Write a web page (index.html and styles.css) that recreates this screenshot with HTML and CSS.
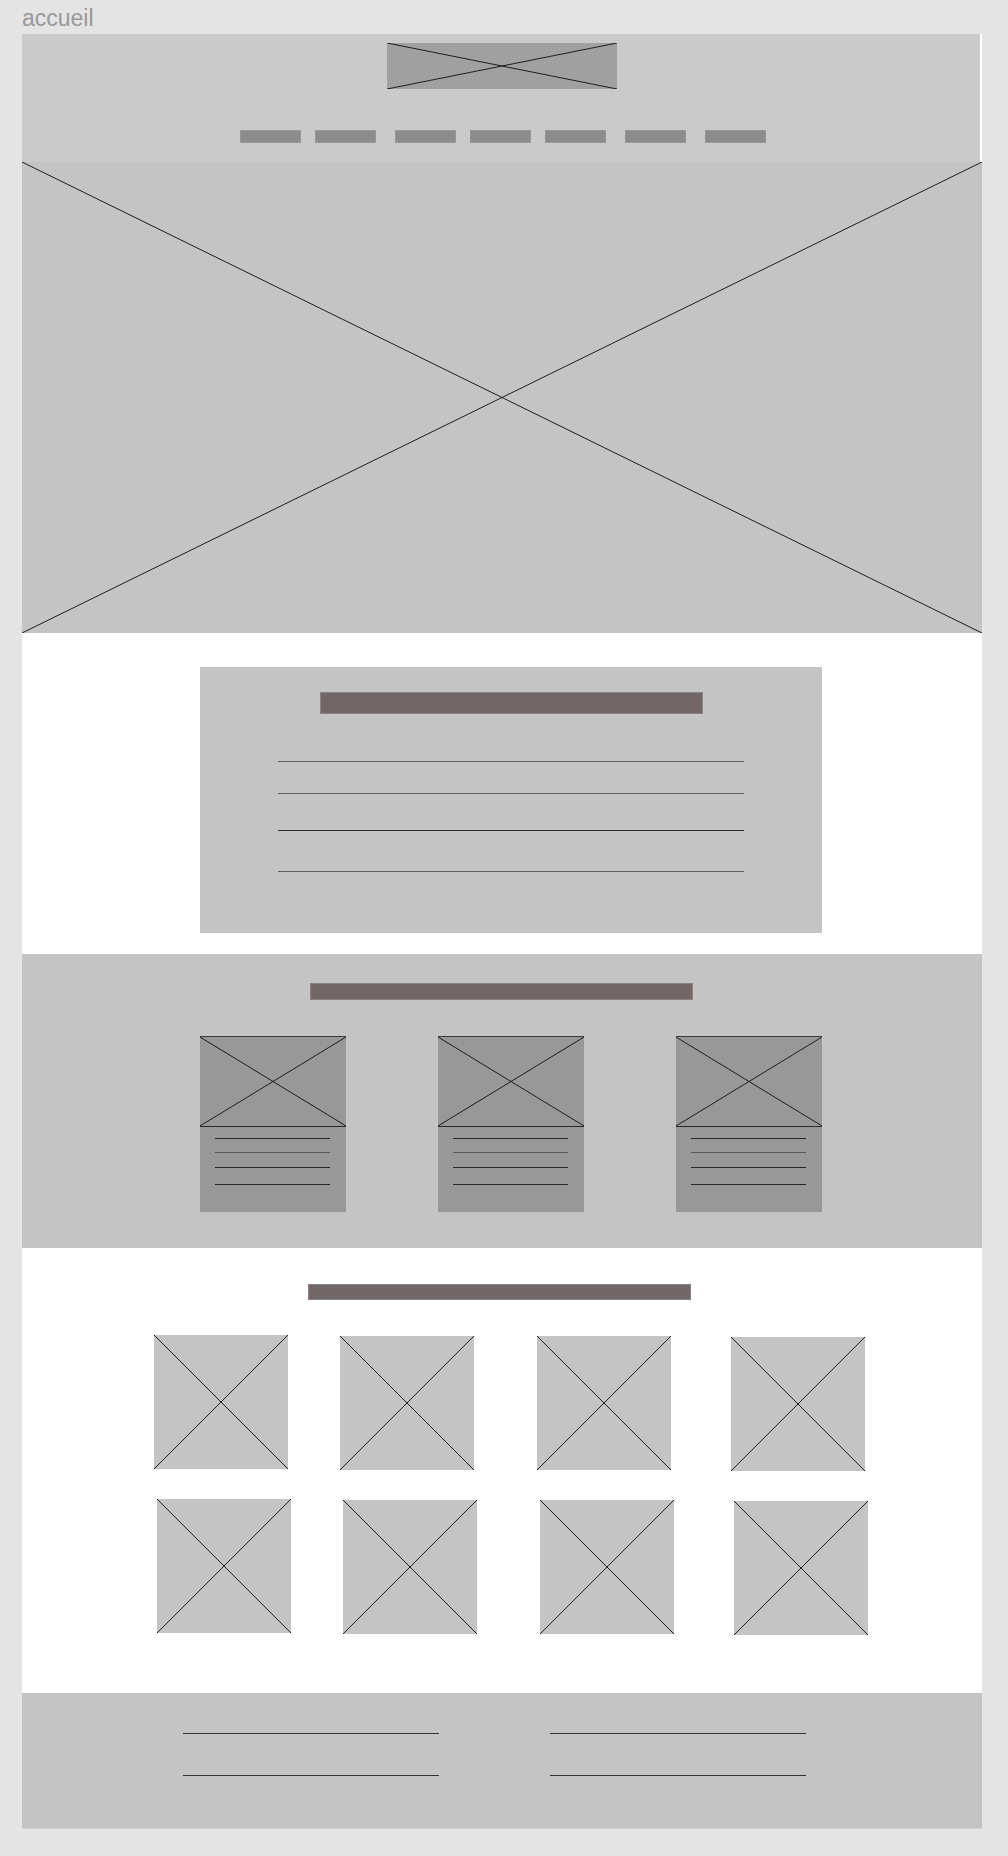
FILE: index.html
```html
<!DOCTYPE html>
<html lang="fr">
<head>
<meta charset="utf-8">
<title>accueil</title>
<link rel="stylesheet" href="styles.css">
</head>
<body>
<div class="label">accueil</div>
<div class="frame">
  <header class="header">
    <div class="logo ph">
      <svg viewBox="0 0 100 100" preserveAspectRatio="none"><line x1="0" y1="0" x2="100" y2="100"/><line x1="0" y1="100" x2="100" y2="0"/></svg>
    </div>
    <nav class="nav">
      <span class="nav-item"></span>
      <span class="nav-item"></span>
      <span class="nav-item"></span>
      <span class="nav-item"></span>
      <span class="nav-item"></span>
      <span class="nav-item"></span>
      <span class="nav-item"></span>
    </nav>
  </header>

  <section class="hero ph">
    <svg viewBox="0 0 100 100" preserveAspectRatio="none"><line x1="0" y1="0" x2="100" y2="100"/><line x1="0" y1="100" x2="100" y2="0"/></svg>
  </section>

  <section class="intro">
    <div class="intro-card">
      <div class="title-bar intro-title"></div>
      <div class="intro-lines">
        <span class="rule l1"></span>
        <span class="rule l2"></span>
        <span class="rule l3"></span>
        <span class="rule l4"></span>
      </div>
    </div>
  </section>

  <section class="features">
    <div class="title-bar sec-title"></div>
    <div class="cards">
      <div class="card">
        <div class="card-img ph"><svg viewBox="0 0 100 100" preserveAspectRatio="none"><line x1="0" y1="0" x2="100" y2="100"/><line x1="0" y1="100" x2="100" y2="0"/></svg></div>
        <div class="card-lines"><span class="cl a"></span><span class="cl b"></span><span class="cl c"></span><span class="cl d"></span></div>
      </div>
      <div class="card">
        <div class="card-img ph"><svg viewBox="0 0 100 100" preserveAspectRatio="none"><line x1="0" y1="0" x2="100" y2="100"/><line x1="0" y1="100" x2="100" y2="0"/></svg></div>
        <div class="card-lines"><span class="cl a"></span><span class="cl b"></span><span class="cl c"></span><span class="cl d"></span></div>
      </div>
      <div class="card">
        <div class="card-img ph"><svg viewBox="0 0 100 100" preserveAspectRatio="none"><line x1="0" y1="0" x2="100" y2="100"/><line x1="0" y1="100" x2="100" y2="0"/></svg></div>
        <div class="card-lines"><span class="cl a"></span><span class="cl b"></span><span class="cl c"></span><span class="cl d"></span></div>
      </div>
    </div>
  </section>

  <section class="gallery">
    <div class="title-bar gal-title"></div>
    <div class="gal-row row1">
      <div class="tile ph"><svg viewBox="0 0 100 100" preserveAspectRatio="none"><line x1="0" y1="0" x2="100" y2="100"/><line x1="0" y1="100" x2="100" y2="0"/></svg></div>
      <div class="tile ph"><svg viewBox="0 0 100 100" preserveAspectRatio="none"><line x1="0" y1="0" x2="100" y2="100"/><line x1="0" y1="100" x2="100" y2="0"/></svg></div>
      <div class="tile ph"><svg viewBox="0 0 100 100" preserveAspectRatio="none"><line x1="0" y1="0" x2="100" y2="100"/><line x1="0" y1="100" x2="100" y2="0"/></svg></div>
      <div class="tile ph"><svg viewBox="0 0 100 100" preserveAspectRatio="none"><line x1="0" y1="0" x2="100" y2="100"/><line x1="0" y1="100" x2="100" y2="0"/></svg></div>
    </div>
    <div class="gal-row row2">
      <div class="tile ph"><svg viewBox="0 0 100 100" preserveAspectRatio="none"><line x1="0" y1="0" x2="100" y2="100"/><line x1="0" y1="100" x2="100" y2="0"/></svg></div>
      <div class="tile ph"><svg viewBox="0 0 100 100" preserveAspectRatio="none"><line x1="0" y1="0" x2="100" y2="100"/><line x1="0" y1="100" x2="100" y2="0"/></svg></div>
      <div class="tile ph"><svg viewBox="0 0 100 100" preserveAspectRatio="none"><line x1="0" y1="0" x2="100" y2="100"/><line x1="0" y1="100" x2="100" y2="0"/></svg></div>
      <div class="tile ph"><svg viewBox="0 0 100 100" preserveAspectRatio="none"><line x1="0" y1="0" x2="100" y2="100"/><line x1="0" y1="100" x2="100" y2="0"/></svg></div>
    </div>
  </section>

  <footer class="footer">
    <div class="foot-col"><span class="fl"></span><span class="fl"></span></div>
    <div class="foot-col"><span class="fl"></span><span class="fl"></span></div>
  </footer>
</div>
</body>
</html>
```
FILE: styles.css
```css
* { box-sizing: border-box; }

html, body {
  margin: 0;
  padding: 0;
  background: #e4e4e4;
}

body {
  font-family: "Liberation Sans", Arial, sans-serif;
  min-height: 1856px;
}

.label {
  height: 34px;
  padding: 2px 0 0 22px;
  font-size: 23px;
  line-height: 32px;
  color: #999999;
}

.frame {
  width: 960px;
  margin-left: 22px;
  background: #ffffff;
  border-bottom: 1px solid #d2d2d2;
}

/* placeholder crossed boxes */
.ph svg {
  display: block;
  width: 100%;
  height: 100%;
}
.ph line {
  stroke: #1e1e1e;
  stroke-width: 1;
  vector-effect: non-scaling-stroke;
  shape-rendering: geometricPrecision;
}

/* header */
.header {
  width: 958px;
  height: 128px;
  background: #cacaca;
  display: flex;
  flex-direction: column;
}
.logo {
  width: 230px;
  height: 46px;
  margin: 9px 0 0 365px;
  background: #a0a0a0;
}
.nav {
  display: flex;
  margin: 41px 0 0 218px;
}
.nav-item {
  width: 61px;
  height: 13px;
  background: #8c8c8c;
  border: 1px solid #979797;
}
.nav-item + .nav-item { margin-left: 14px; }
.nav-item:nth-child(3),
.nav-item:nth-child(6),
.nav-item:nth-child(7) { margin-left: 19px; }

/* hero */
.hero {
  height: 471px;
  background: #c4c4c4;
}

/* title bars */
.title-bar {
  width: 383px;
  background: #716766;
  border: 1px solid #8a8282;
}

/* intro */
.intro {
  height: 321px;
  padding: 34px 0 0 178px;
}
.intro-card {
  width: 622px;
  height: 266px;
  background: #c4c4c4;
  display: flex;
  flex-direction: column;
  align-items: center;
  padding-top: 25px;
}
.intro-title { height: 22px; }
.intro-lines {
  display: flex;
  flex-direction: column;
  width: 466px;
}
.rule {
  display: block;
  height: 1px;
  background: #5e5e5e;
}
.l1 { margin-top: 47px; }
.l2 { margin-top: 31px; }
.l3 { margin-top: 36px; background: #2a2a2a; }
.l4 { margin-top: 40px; }

/* features */
.features {
  height: 294px;
  background: #c4c4c4;
  padding-top: 29px;
  display: flex;
  flex-direction: column;
}
.sec-title {
  height: 17px;
  margin-left: 288px;
}
.cards {
  display: flex;
  gap: 92px;
  margin: 36px 0 0 178px;
}
.card {
  width: 146px;
  height: 176px;
  background: #989898;
  display: flex;
  flex-direction: column;
}
.card-img {
  height: 91px;
  border-top: 1px solid #3a3a3a;
  border-bottom: 1px solid #2a2a2a;
}
.card-lines {
  display: flex;
  flex-direction: column;
  padding-left: 15px;
}
.cl {
  display: block;
  width: 115px;
  height: 1px;
  background: #262626;
}
.cl.a { margin-top: 11px; }
.cl.b { margin-top: 13px; background: #5a5a5a; }
.cl.c { margin-top: 14px; }
.cl.d { margin-top: 16px; }

/* gallery */
.gallery {
  height: 445px;
  padding-top: 36px;
  display: flex;
  flex-direction: column;
}
.gal-title {
  height: 16px;
  margin-left: 286px;
}
.gal-row {
  display: flex;
  align-items: flex-start;
}
.row1 { margin: 35px 0 0 132px; }
.row2 { margin: 28px 0 0 135px; }
.tile {
  width: 134px;
  height: 134px;
  background: #c4c4c4;
}
.tile:nth-child(2) { margin: 1px 0 0 52px; }
.tile:nth-child(3) { margin: 1px 0 0 63px; }
.tile:nth-child(4) { margin: 2px 0 0 60px; }

/* footer */
.footer {
  height: 135px;
  background: #c4c4c4;
  display: flex;
  gap: 111px;
  padding: 40px 0 0 161px;
}
.foot-col {
  display: flex;
  flex-direction: column;
  width: 256px;
}
.fl {
  display: block;
  height: 1px;
  background: #333333;
}
.fl + .fl { margin-top: 41px; }
```
